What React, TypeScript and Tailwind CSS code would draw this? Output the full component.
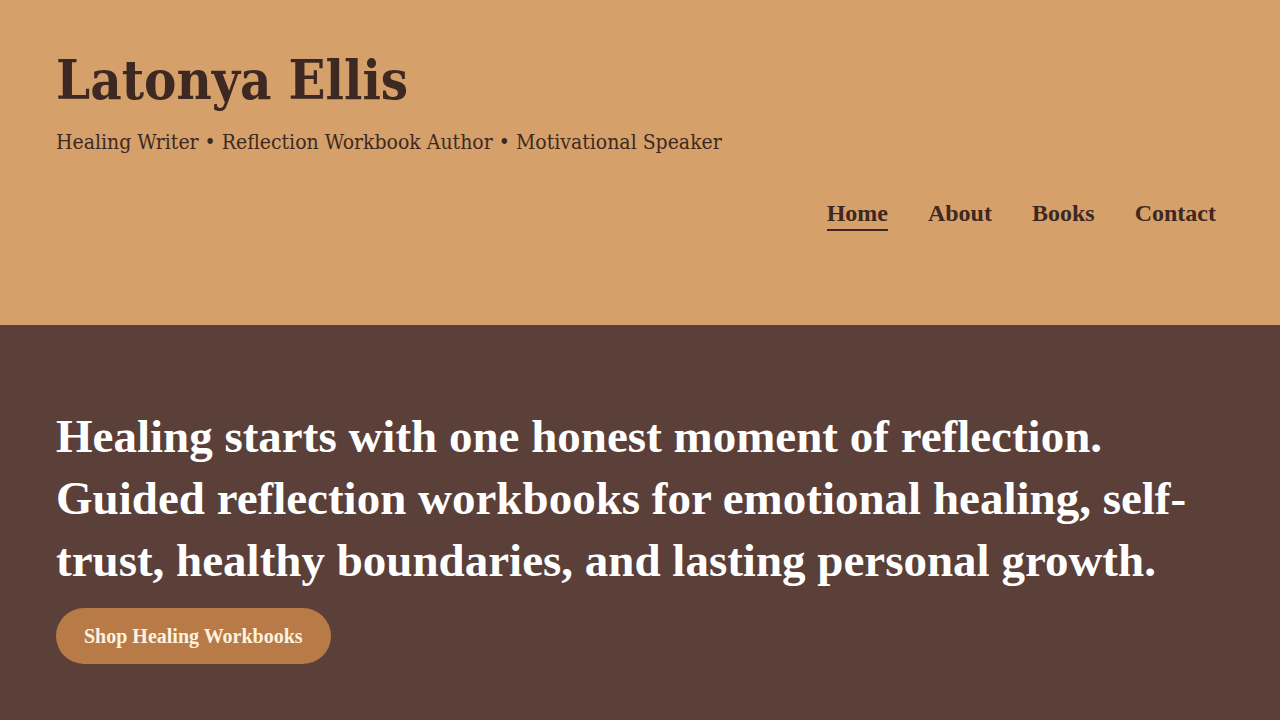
export default function App() {
  const links = ['Home', 'About', 'Books', 'Contact']
  return (
    <div className="min-h-screen bg-[#5b4039] font-['Liberation_Serif',serif]">
      <header className="bg-[#d6a06a] pl-14 pr-16 pt-[40px] h-[325px]">
        <h1 className="font-['DejaVu_Serif_Condensed','DejaVu_Serif',serif] font-stretch-condensed font-bold text-[54px] leading-[80px] text-[#3d2922]">
          Latonya Ellis
        </h1>
        <p className="mt-[6px] font-['DejaVu_Serif_Condensed','DejaVu_Serif',serif] font-stretch-condensed text-[21px] leading-8 text-[#3d2922]">
          Healing Writer • Reflection Workbook Author • Motivational Speaker
        </p>
        <nav className="mt-[39px] flex justify-end gap-10">
          {links.map((l, i) => (
            <a
              key={l}
              href="#"
              className={`text-2xl font-bold text-[#3d2922] pb-0 border-b-2 ${i === 0 ? 'border-[#3d2922]' : 'border-transparent'}`}
            >
              {l}
            </a>
          ))}
        </nav>
      </header>
      <section className="px-14 pt-20 pb-14">
        <h2 className="text-[47px] leading-[62px] font-bold text-white">
          Healing starts with one honest moment of reflection. Guided reflection workbooks for emotional healing, self-trust, healthy boundaries, and lasting personal growth.
        </h2>
        <button className="mt-[17px] rounded-full bg-[#b87a47] px-7 h-14 text-xl font-bold text-[#fdf2e0]">
          Shop Healing Workbooks
        </button>
      </section>
    </div>
  )
}
